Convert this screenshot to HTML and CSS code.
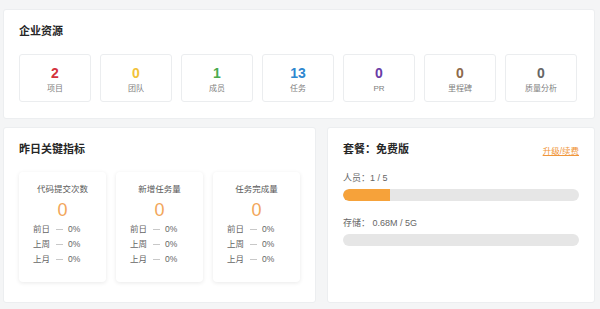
FILE: index.html
```html
<!DOCTYPE html>
<html lang="zh">
<head>
<meta charset="utf-8">
<link rel="stylesheet" href="styles.css">
</head>
<body>
<div class="page">
  <section class="card resources">
    <h2 class="card-title">企业资源</h2>
    <div class="stats">
      <div class="stat"><div class="num red">2</div><div class="label">项目</div></div>
      <div class="stat"><div class="num yellow">0</div><div class="label">团队</div></div>
      <div class="stat"><div class="num green">1</div><div class="label">成员</div></div>
      <div class="stat"><div class="num blue">13</div><div class="label">任务</div></div>
      <div class="stat"><div class="num purple">0</div><div class="label">PR</div></div>
      <div class="stat"><div class="num brown">0</div><div class="label">里程碑</div></div>
      <div class="stat"><div class="num gray">0</div><div class="label">质量分析</div></div>
    </div>
  </section>
  <div class="row">
    <section class="card metrics">
      <h2 class="card-title">昨日关键指标</h2>
      <div class="metric-list">
        <div class="metric">
          <div class="metric-title">代码提交次数</div>
          <div class="metric-num">0</div>
          <div class="cmp"><span>前日</span><span class="dash"></span><span>0%</span></div>
          <div class="cmp"><span>上周</span><span class="dash"></span><span>0%</span></div>
          <div class="cmp"><span>上月</span><span class="dash"></span><span>0%</span></div>
        </div>
        <div class="metric">
          <div class="metric-title">新增任务量</div>
          <div class="metric-num">0</div>
          <div class="cmp"><span>前日</span><span class="dash"></span><span>0%</span></div>
          <div class="cmp"><span>上周</span><span class="dash"></span><span>0%</span></div>
          <div class="cmp"><span>上月</span><span class="dash"></span><span>0%</span></div>
        </div>
        <div class="metric">
          <div class="metric-title">任务完成量</div>
          <div class="metric-num">0</div>
          <div class="cmp"><span>前日</span><span class="dash"></span><span>0%</span></div>
          <div class="cmp"><span>上周</span><span class="dash"></span><span>0%</span></div>
          <div class="cmp"><span>上月</span><span class="dash"></span><span>0%</span></div>
        </div>
      </div>
    </section>
    <section class="card plan">
      <div class="plan-head">
        <h2 class="card-title">套餐：免费版</h2>
        <a class="upgrade" href="#">升级/续费</a>
      </div>
      <div class="usage-label">人员：1 / 5</div>
      <div class="bar"><div class="fill" style="width:20%"></div></div>
      <div class="usage-label">存储：&nbsp;0.68M / 5G</div>
      <div class="bar"><div class="fill" style="width:0%"></div></div>
    </section>
  </div>
</div>
</body>
</html>
```

FILE: styles.css
```css
* { box-sizing: border-box; }
html, body { margin: 0; padding: 0; }
body {
  background: #f4f5f6;
  font-family: "Liberation Sans", "Noto Sans CJK SC", sans-serif;
  color: #333;
  width: 600px;
  height: 309px;
  overflow: hidden;
}
.page {
  padding: 9px 5px 0 3px;
}
.card {
  background: #fff;
  border: 1px solid #eceef0;
  border-radius: 3px;
  padding: 15px;
}
.card-title {
  margin: 0;
  font-size: 11px;
  line-height: 13px;
  font-weight: 700;
  color: #262626;
}
.resources { height: 110px; }
.stats {
  display: flex;
  gap: 9px;
  margin-top: 16px;
}
.stat {
  width: 72px;
  height: 48px;
  border: 1px solid #ebedef;
  border-radius: 3px;
  text-align: center;
  padding-top: 10px;
}
.num {
  font-size: 14px;
  line-height: 16px;
  font-weight: 700;
}
.label {
  font-size: 8px;
  line-height: 12px;
  margin-top: 2px;
  color: #808080;
}
.red { color: #d4323c; }
.yellow { color: #f2c23a; }
.green { color: #4aaa4e; }
.blue { color: #2e87d0; }
.purple { color: #6a3ca6; }
.brown { color: #8d6a4c; }
.gray { color: #666; }
.row {
  display: grid;
  grid-template-columns: 313px 1fr;
  gap: 11px;
  margin-top: 8px;
}
.metrics { height: 176px; }
.metric-list {
  display: flex;
  gap: 10px;
  margin-top: 16px;
}
.metric {
  flex: 1;
  height: 110px;
  border-radius: 4px;
  background: #fff;
  box-shadow: 0 1px 4px rgba(0,0,0,0.09);
  padding: 11px 0 0 14px;
}
.metric-title {
  font-size: 8.5px;
  line-height: 12px;
  color: #595959;
  text-align: center;
  margin-left: -14px;
}
.metric-num {
  font-size: 18px;
  line-height: 20px;
  color: #f2a65a;
  text-align: center;
  margin: 5px 0 2px -14px;
}
.cmp {
  display: flex;
  align-items: center;
  font-size: 8.5px;
  line-height: 15px;
  color: #666;
}
.cmp .dash {
  width: 7px;
  height: 1px;
  background: #c8c8c8;
  margin: 0 5px 0 6px;
}
.plan { height: 176px; }
.plan-head {
  display: flex;
  justify-content: space-between;
  align-items: center;
}
.upgrade {
  font-size: 8.5px;
  color: #f0963a;
  text-decoration: underline;
}
.usage-label {
  font-size: 9px;
  line-height: 12px;
  color: #666;
  margin-top: 16px;
}
.bar {
  margin-top: 5px;
  height: 12px;
  border-radius: 6px;
  background: #e6e6e6;
  overflow: hidden;
}
.fill {
  height: 100%;
  background: #f6a23a;
  border-radius: 6px 0 0 6px;
}
```
